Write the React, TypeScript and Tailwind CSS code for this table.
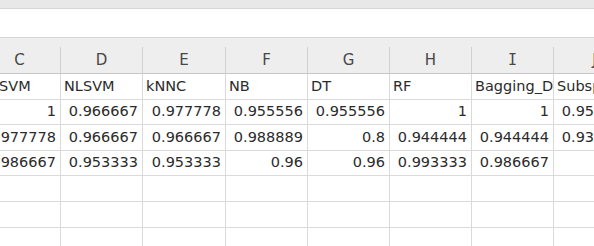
import React from "react";

type Cell = string | number | null;

// visible columns, first one runs off the left edge
const columns: { key: string; width: string }[] = [
  { key: "C", width: "w-[82px]" },
  { key: "D", width: "w-[82px]" },
  { key: "E", width: "w-[83px]" },
  { key: "F", width: "w-[82px]" },
  { key: "G", width: "w-[82px]" },
  { key: "H", width: "w-[82px]" },
  { key: "I", width: "w-[82px]" },
  { key: "J", width: "w-[82px]" },
];

const rows: Cell[][] = [
  ["LSVM", "NLSVM", "kNNC", "NB", "DT", "RF", "Bagging_DT", "Subspace_KNN"],
  [1, 0.966667, 0.977778, 0.955556, 0.955556, 1, 1, 0.955556],
  [0.977778, 0.966667, 0.966667, 0.988889, 0.8, 0.944444, 0.944444, 0.933333],
  [0.986667, 0.953333, 0.953333, 0.96, 0.96, 0.993333, 0.986667, null],
  [null, null, null, null, null, null, null, null],
  [null, null, null, null, null, null, null, null],
  [null, null, null, null, null, null, null, null],
];

const rowHeights = ["h-[26px]", "h-[25px]", "h-[26px]", "h-[25px]", "h-[26px]", "h-[26px]", "h-[26px]"];

function DataCell({ value, width, first }: { value: Cell; width: string; first: boolean }) {
  const isNum = typeof value === "number";
  return (
    <div
      className={`${width} shrink-0 h-full border-r border-b border-[#dadada] overflow-hidden whitespace-nowrap flex items-center ${
        isNum ? "justify-end pr-[4px]" : first ? "pl-[12px]" : "pl-[3px]"
      }`}
    >
      {value !== null && <span>{String(value)}</span>}
    </div>
  );
}

export default function App() {
  return (
    <div className="w-[594px] h-[246px] overflow-hidden bg-white font-['DejaVu_Sans',sans-serif] text-[#2b2b2b]">
      {/* ribbon edge + formula bar */}
      <div className="h-[9px] bg-[#e8e8e8] border-b border-[#d6d6d6]" />
      <div className="h-[29px] bg-white border-b border-[#d6d6d6]" />

      {/* column letters */}
      <div className="bg-[#eeeeee] pt-[9px]">
        <div className="flex -ml-[21px] h-[27px]">
          {columns.map((c) => (
            <div
              key={c.key}
              className={`${c.width} shrink-0 h-full border-r border-b border-r-[#d0d0d0] border-b-[#c6c6c6] flex items-center justify-center text-[15px] text-[#474747] ${
                c.key === "I" ? "font-['DejaVu_Sans_Mono',monospace]" : ""
              }`}
            >
              {c.key}
            </div>
          ))}
        </div>
      </div>

      {/* sheet body */}
      <div className="text-[14.5px]">
        {rows.map((row, r) => (
          <div key={r} className={`flex -ml-[21px] ${rowHeights[r]}`}>
            {row.map((v, i) => (
              <DataCell key={i} value={v} width={columns[i].width} first={i === 0} />
            ))}
          </div>
        ))}
      </div>
    </div>
  );
}
